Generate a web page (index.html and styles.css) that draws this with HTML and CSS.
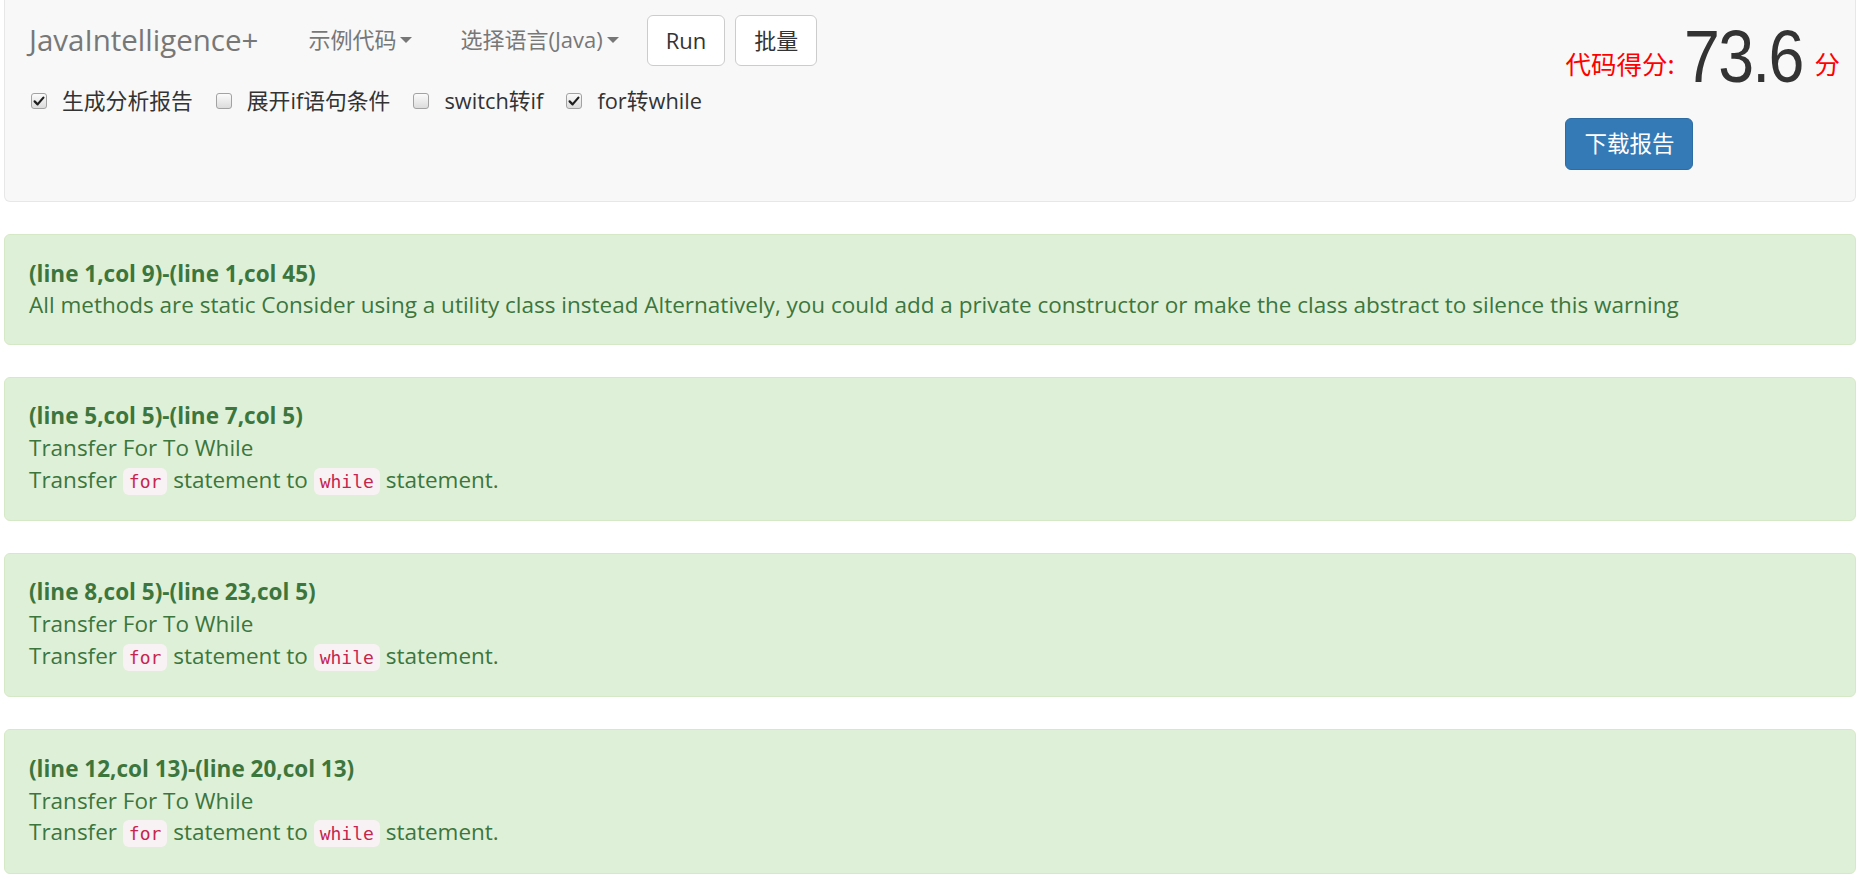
FILE: index.html
```html
<!DOCTYPE html>
<html lang="zh-CN">
<head>
<meta charset="utf-8">
<title>JavaIntelligence+</title>
<link rel="stylesheet" href="styles.css">
</head>
<body>
<nav class="navbar">
  <div class="nav-left">
    <div class="nav-row">
      <span class="brand">JavaIntelligence+</span>
      <span class="nav-link nav-sample">示例代码<span class="caret"></span></span>
      <span class="nav-link nav-lang">选择语言(Java)<span class="caret"></span></span>
      <button class="btn btn-default btn-run">Run</button>
      <button class="btn btn-default">批量</button>
    </div>
    <div class="check-row">
      <label class="check"><span class="box"><svg viewBox="0 0 16 16" width="16" height="16"><path d="M3.6 8.4 L6.6 11.4 L12.4 4.6" fill="none" stroke="#1e1e1e" stroke-width="2.2" stroke-linecap="round" stroke-linejoin="round"/></svg></span><span class="check-text">生成分析报告</span></label>
      <label class="check"><span class="box"></span><span class="check-text">展开if语句条件</span></label>
      <label class="check"><span class="box"></span><span class="check-text">switch转if</span></label>
      <label class="check"><span class="box"><svg viewBox="0 0 16 16" width="16" height="16"><path d="M3.6 8.4 L6.6 11.4 L12.4 4.6" fill="none" stroke="#1e1e1e" stroke-width="2.2" stroke-linecap="round" stroke-linejoin="round"/></svg></span><span class="check-text">for转while</span></label>
    </div>
  </div>
  <div class="nav-right">
    <div class="score-row">
      <span class="score-label">代码得分:</span>
      <span class="score-num">73.6</span>
      <span class="score-unit">分</span>
    </div>
    <button class="btn btn-primary">下载报告</button>
  </div>
</nav>

<div class="alert">
  <div class="alert-title">(line 1,col 9)-(line 1,col 45)</div>
  <div>All methods are static Consider using a utility class instead Alternatively, you could add a private constructor or make the class abstract to silence this warning</div>
</div>

<div class="alert">
  <div class="alert-title">(line 5,col 5)-(line 7,col 5)</div>
  <div>Transfer For To While</div>
  <div>Transfer <code>for</code> statement to <code>while</code> statement.</div>
</div>

<div class="alert">
  <div class="alert-title">(line 8,col 5)-(line 23,col 5)</div>
  <div>Transfer For To While</div>
  <div>Transfer <code>for</code> statement to <code>while</code> statement.</div>
</div>

<div class="alert">
  <div class="alert-title">(line 12,col 13)-(line 20,col 13)</div>
  <div>Transfer For To While</div>
  <div>Transfer <code>for</code> statement to <code>while</code> statement.</div>
</div>
</body>
</html>
```

FILE: styles.css
```css
html, body {
  margin: 0;
  background: #fff;
}
body {
  padding: 0 6px 0 4px;
  font-family: "Open Sans", "Noto Sans CJK SC", sans-serif;
  font-size: 22.5px;
  line-height: 31.8px;
  color: #333;
}

/* ---------- navbar ---------- */
.navbar {
  display: flex;
  justify-content: space-between;
  height: 202px;
  box-sizing: border-box;
  background: #f8f8f8;
  border: 1.5px solid #e7e7e7;
  border-top: 0;
  border-radius: 0 0 6px 6px;
  padding: 0 15px 0 24px;
  margin-bottom: 32px;
}
.nav-left {
  display: flex;
  flex-direction: column;
}
.nav-row {
  display: flex;
  align-items: center;
  height: 80px;
}
.brand {
  font-size: 29.5px;
  color: #777;
  margin-right: 50px;
}
.nav-link {
  display: inline-flex;
  align-items: center;
  font-size: 22px;
  color: #777;
}
.nav-sample { margin-right: 48px; }
.nav-lang { margin-right: 28px; }
.caret {
  display: inline-block;
  width: 0;
  height: 0;
  margin-left: 4px;
  border-top: 6px solid #777;
  border-left: 6px solid transparent;
  border-right: 6px solid transparent;
}
.btn {
  font-family: "Open Sans", "Noto Sans CJK SC", sans-serif;
  font-size: 22px;
  line-height: 30px;
  height: 51px;
  padding: 9px 18px;
  border-radius: 6px;
  border: 1.5px solid #ccc;
  background: #fff;
  color: #333;
  cursor: pointer;
}
.btn-run { margin-right: 10px; }
.btn-primary {
  background: #337ab7;
  border-color: #2e6da4;
  color: #fff;
  height: 52px;
  font-size: 22.5px;
  padding: 9px 18px;
}

.check-row {
  display: flex;
  align-items: center;
  height: 42px;
  padding-left: 2px;
}
.check {
  display: inline-flex;
  align-items: center;
  margin-right: 23px;
  font-size: 21.8px;
  color: #333;
}
.box {
  display: inline-block;
  width: 14px;
  height: 14px;
  border: 1px solid #a2a2a2;
  border-radius: 3px;
  background: linear-gradient(#fbfbfb, #dcdcdc);
  margin-right: 15px;
  position: relative;
}
.box svg {
  position: absolute;
  left: -1px;
  top: -1px;
}

/* ---------- score ---------- */
.nav-right {
  display: flex;
  flex-direction: column;
  align-items: flex-start;
}
.score-row {
  display: flex;
  align-items: flex-start;
  height: 96px;
}
.score-label, .score-unit {
  font-family: "Noto Sans CJK SC", sans-serif;
  font-size: 25.5px;
  line-height: 30px;
  margin-top: 48px;
  color: #f00;
}
.score-num {
  font-family: "Liberation Sans", sans-serif;
  font-size: 75px;
  line-height: 75px;
  margin-top: 19px;
  color: #333;
  display: inline-block;
  width: 124px;
  margin-left: 10px;
  margin-right: 6px;
  letter-spacing: -2px;
  transform: scaleX(0.86);
  transform-origin: left center;
}
.btn-primary { margin-top: 22px; }

/* ---------- alerts ---------- */
.alert {
  background: #dff0d8;
  border: 1.5px solid #d6e9c6;
  border-radius: 6px;
  color: #3c763d;
  padding: 22.5px 24px;
  margin-bottom: 32px;
}
.alert-title {
  font-weight: bold;
}
code {
  font-family: "DejaVu Sans Mono", monospace;
  font-size: 18px;
  color: #c7254e;
  background: #f9f2f4;
  border-radius: 6px;
  padding: 3px 6px;
}
```
